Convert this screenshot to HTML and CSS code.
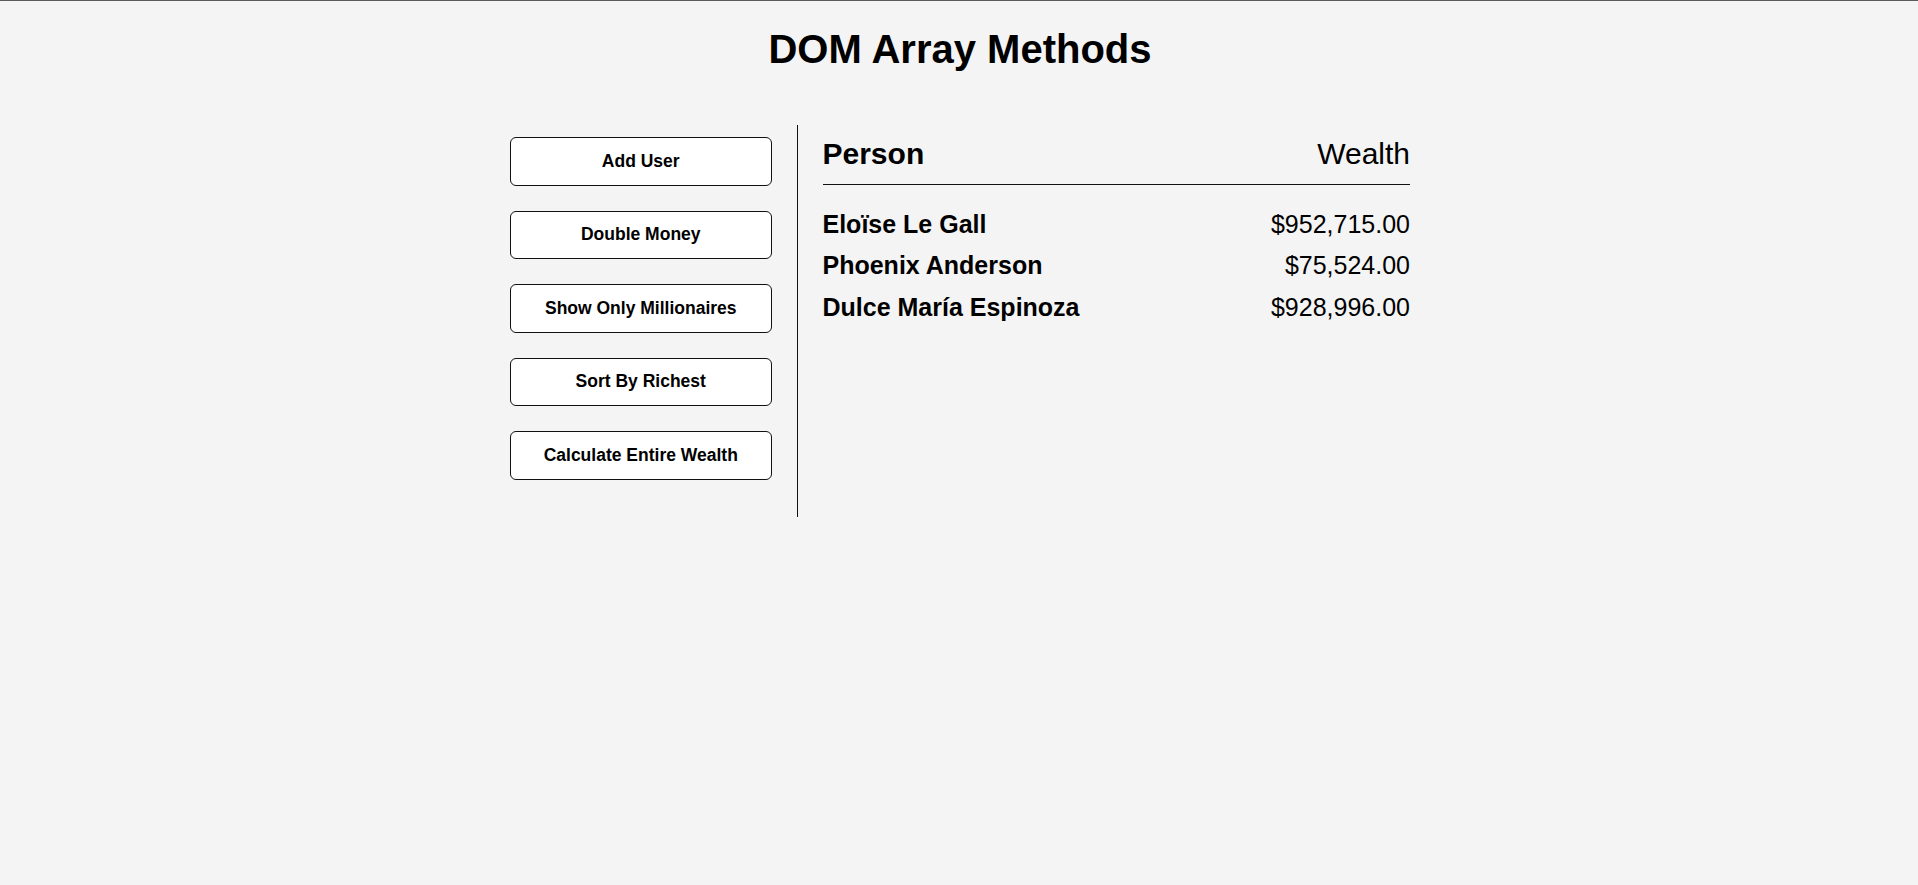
FILE: index.html
```html
<!DOCTYPE html>
<html lang="en">
<head>
<meta charset="UTF-8">
<title>DOM Array Methods</title>
<link rel="stylesheet" href="styles.css">
</head>
<body>
  <h1 class="title">DOM Array Methods</h1>
  <div class="container">
    <aside class="sidebar">
      <button class="btn">Add User</button>
      <button class="btn">Double Money</button>
      <button class="btn">Show Only Millionaires</button>
      <button class="btn">Sort By Richest</button>
      <button class="btn">Calculate Entire Wealth</button>
    </aside>
    <main class="main">
      <h2 class="head"><strong class="strong">Person</strong> Wealth</h2>
      <div class="person"><strong class="strong">Eloïse Le Gall</strong> $952,715.00</div>
      <div class="person"><strong class="strong">Phoenix Anderson</strong> $75,524.00</div>
      <div class="person"><strong class="strong">Dulce María Espinoza</strong> $928,996.00</div>
    </main>
  </div>
</body>
</html>
```
FILE: styles.css
```css
* {
  box-sizing: border-box;
}

html, body {
  margin: 0;
}

body {
  background: #f4f4f4;
  color: #000;
  font-family: "Liberation Sans", Arial, Helvetica, sans-serif;
  display: flex;
  flex-direction: column;
  align-items: center;
  min-height: 100vh;
  padding-left: 2px;
  box-shadow: inset 0 1px 0 #5a5a5a;
}

.title {
  font-size: 40px;
  font-weight: bold;
  margin: 26.8px 0 27.8px;
}

.container {
  display: flex;
  padding: 25px;
  margin: 0 auto;
  width: 1000px;
  max-width: 100%;
}

.sidebar {
  padding: 12.5px 25px;
  width: 312.5px;
  border-right: 1px solid #111;
  flex-shrink: 0;
}

.btn {
  display: block;
  width: 100%;
  background: #fff;
  color: #000;
  border: 1px solid #111;
  border-radius: 6px;
  padding: 12.5px;
  line-height: 21.5px;
  margin: 0 0 25px;
  font-family: "Liberation Sans", Arial, sans-serif;
  font-weight: bold;
  font-size: 17.5px;
  cursor: pointer;
}

.main {
  flex: 1;
  padding: 12.5px 25px;
}

.head {
  display: flex;
  justify-content: space-between;
  font-size: 30px;
  font-weight: 400;
  margin: 0 0 25px;
  padding-bottom: 12.5px;
  border-bottom: 1px solid #111;
}

.strong {
  font-weight: 700;
}

.person {
  display: flex;
  justify-content: space-between;
  font-size: 25px;
  margin-bottom: 12.5px;
}
```
